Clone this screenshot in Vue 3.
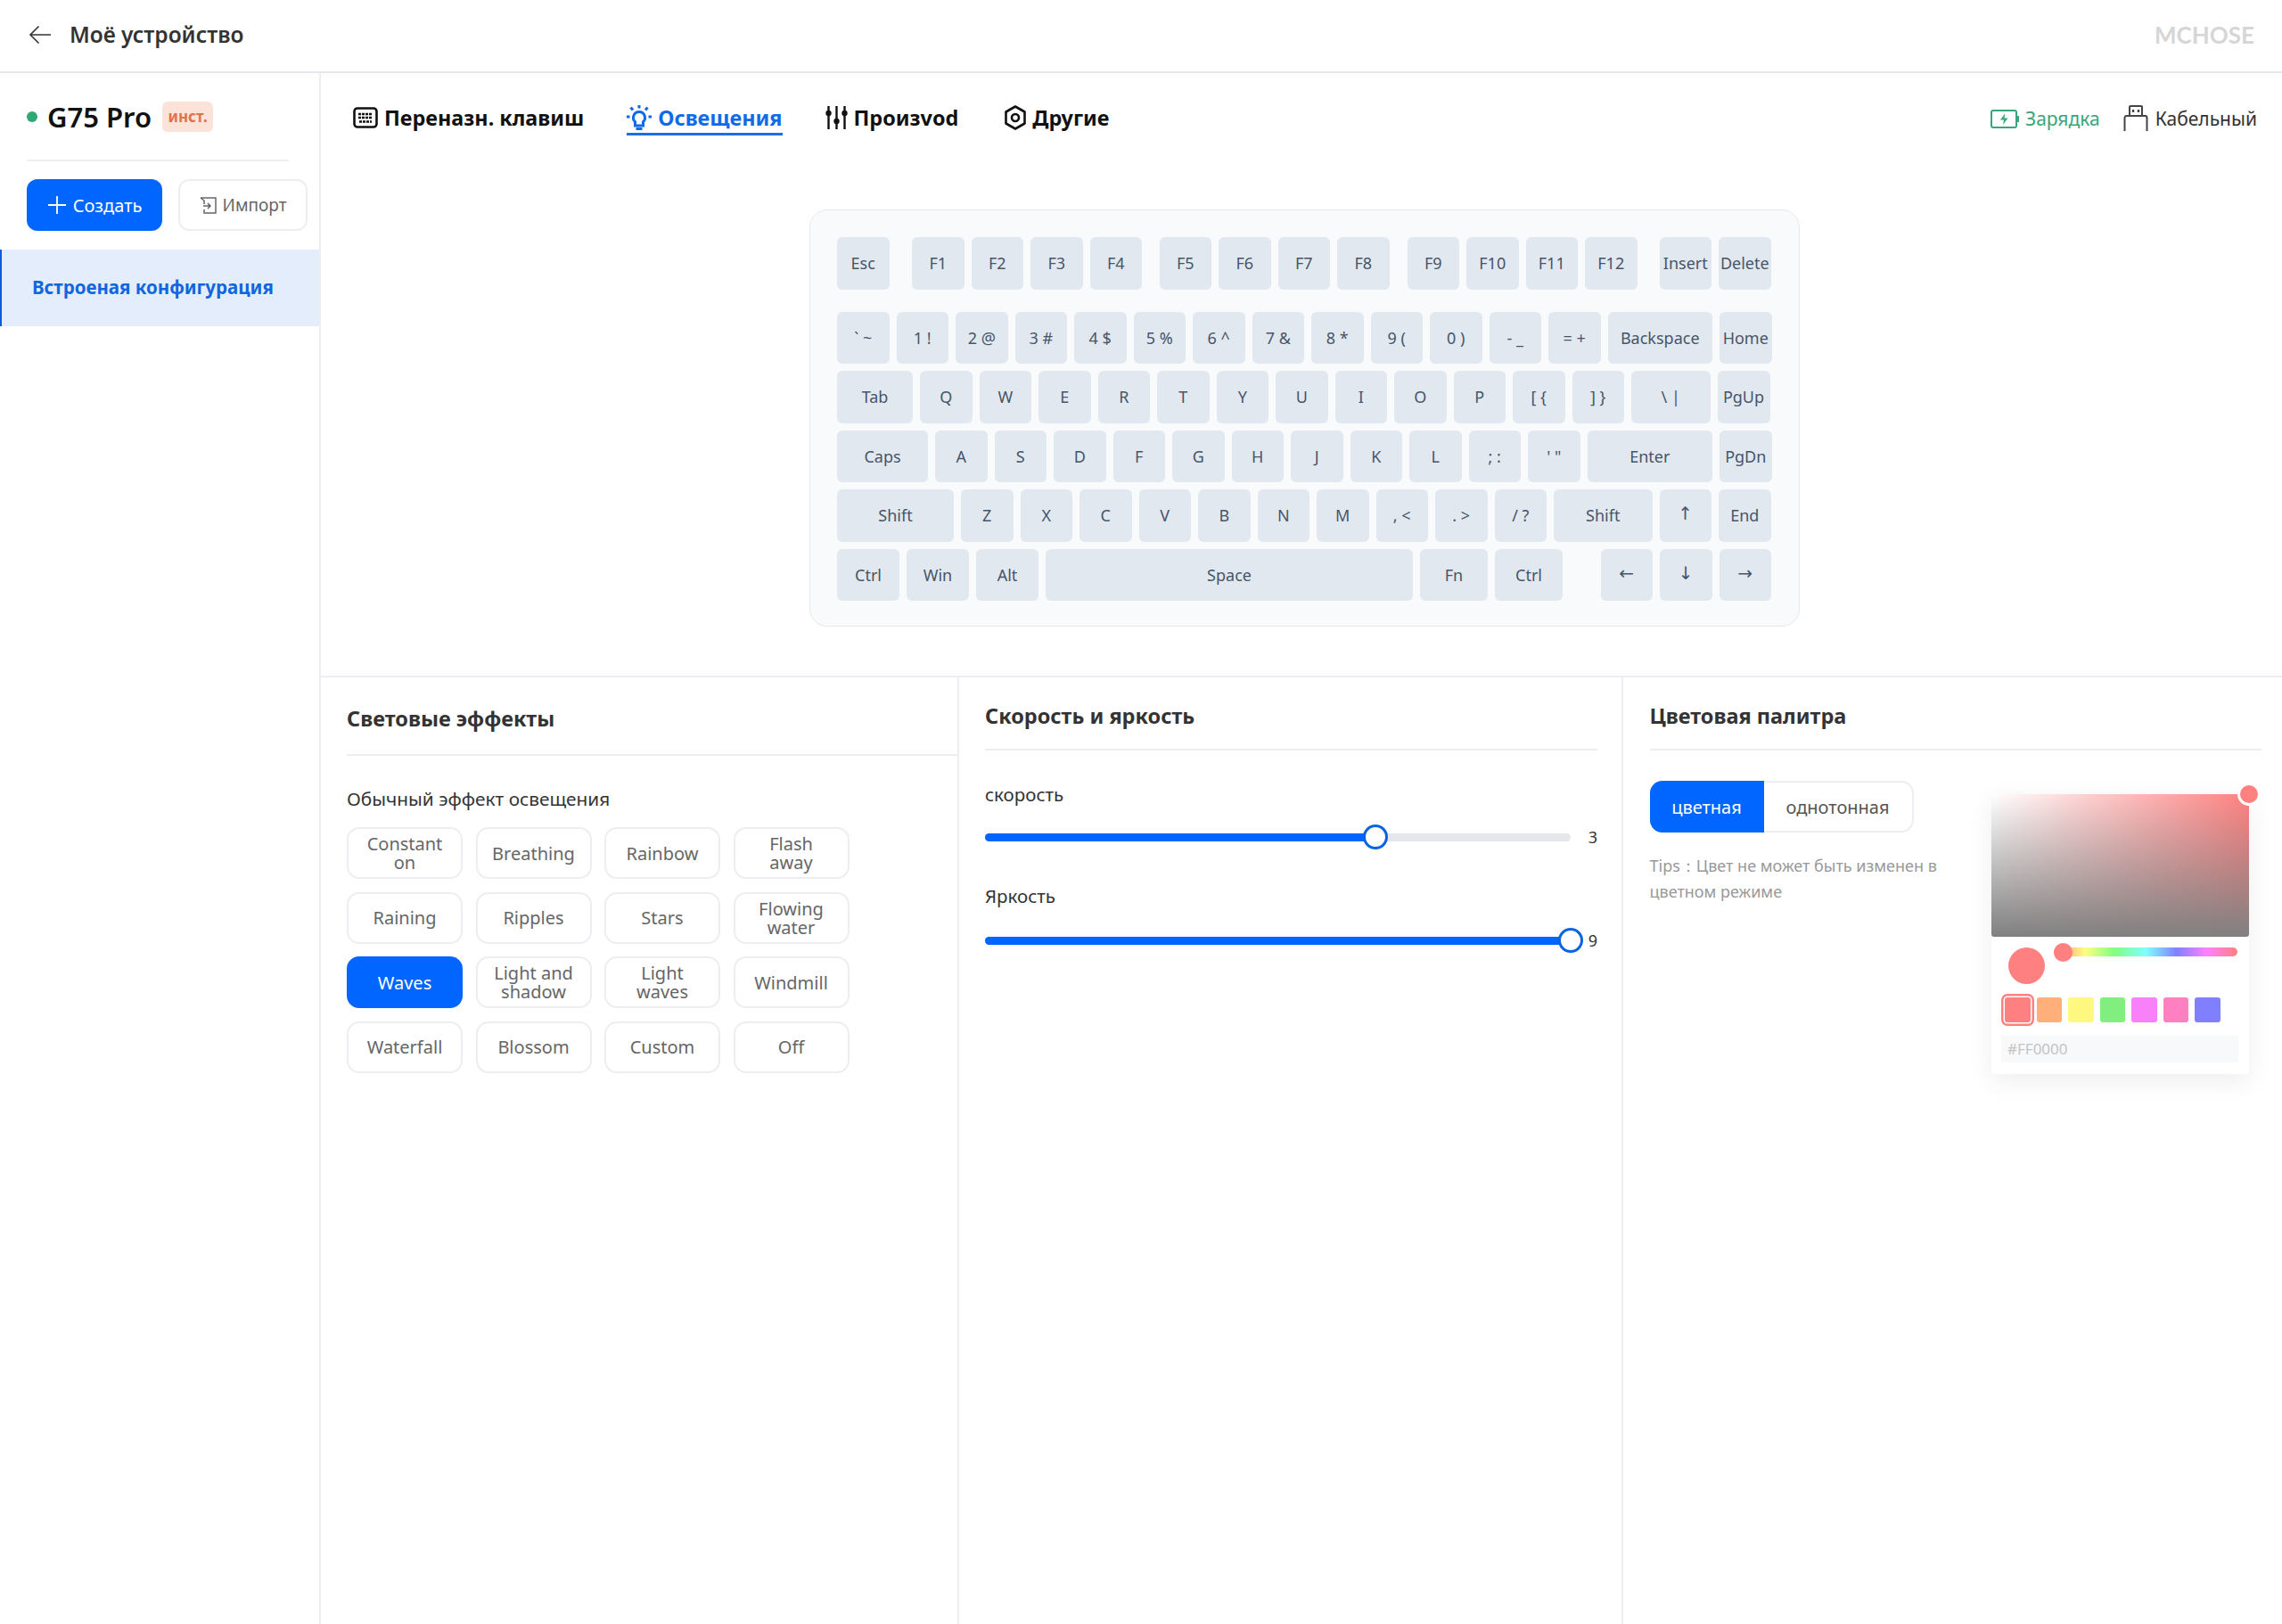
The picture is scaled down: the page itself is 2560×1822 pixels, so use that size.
<script setup>
import { ref } from 'vue'

const k = (t, w = 58.5, ml = 0) => ({ t, w, ml, arrow: '←↑↓→'.includes(t) })
const line = (s) => s.split('|').map((t) => k(t))

const keyRows = [
  [k('Esc'), k('F1', 58.5, 17.5), k('F2'), k('F3'), k('F4'), k('F5', 58.5, 11.5), k('F6'), k('F7'), k('F8'), k('F9', 58.5, 12), k('F10'), k('F11'), k('F12'), k('Insert', 58.5, 17), k('Delete')],
  [...line('` ~|1 !|2 @|3 #|4 $|5 %|6 ^|7 &|8 *|9 (|0 )|- _|= +'), k('Backspace', 117.5), k('Home')],
  [k('Tab', 85), ...line('Q|W|E|R|T|Y|U|I|O|P|[ {|] }'), k('\\ |', 88.5), k('PgUp', 59)],
  [k('Caps', 102), ...line('A|S|D|F|G|H|J|K|L|; :'), k("' \""), k('Enter', 140.5), k('PgDn')],
  [k('Shift', 131), ...line('Z|X|C|V|B|N|M|, <|. >|/ ?'), k('Shift', 110.5), k('↑'), k('End')],
  [k('Ctrl', 70), k('Win', 70), k('Alt', 70), k('Space', 412), k('Fn', 76), k('Ctrl', 76), k('←', 58.5, 34.5), k('↓'), k('→')],
]

const effects = [
  'Constant on', 'Breathing', 'Rainbow', 'Flash away',
  'Raining', 'Ripples', 'Stars', 'Flowing water',
  'Waves', 'Light and shadow', 'Light waves', 'Windmill',
  'Waterfall', 'Blossom', 'Custom', 'Off',
]
const current = ref('Waves')

const sliders = [
  { label: 'скорость', value: 3, pct: 66.6 },
  { label: 'Яркость', value: 9, pct: 100 },
]

const swatches = ['#ff8080', '#ffb07a', '#fff880', '#80ef80', '#f880f8', '#ff80c0', '#8080ff']
</script>

<template>
  <div class="page">
    <header class="topbar">
      <svg class="back" width="26" height="22" viewBox="0 0 26 22" fill="none" stroke="#333" stroke-width="1.6">
        <path d="M25 11H2M11.5 1.5 2 11l9.5 9.5" />
      </svg>
      <span class="top-title">Моё устройство</span>
      <span class="logo">MCHOSE</span>
    </header>

    <div class="body">
      <aside class="sidebar">
        <div class="device">
          <i class="dot"></i>
          <span class="device-name">G75 Pro</span>
          <span class="badge">инст.</span>
        </div>
        <div class="side-line"></div>
        <div class="side-btns">
          <button class="btn primary">
            <svg width="22" height="22" viewBox="0 0 22 22" stroke="#fff" stroke-width="1.8"><path d="M11 1v20M1 11h20" /></svg>
            Создать
          </button>
          <button class="btn ghost">
            <svg width="19" height="19" viewBox="0 0 19 19" fill="none" stroke="#666" stroke-width="1.5">
              <path d="M1 1h17v17H5v-4M1 1l4 3v4" /><path d="M4 10h8M9 7l3 3-3 3" />
            </svg>
            Импорт
          </button>
        </div>
        <div class="config">Встроеная конфигурация</div>
      </aside>

      <main class="main">
        <div class="tabs-row">
          <nav class="tabs">
            <a class="tab">
              <svg width="28" height="24" viewBox="0 0 28 24" fill="none" stroke="#111" stroke-width="2.6">
                <rect x="1.500" y="1.500" width="25" height="21" rx="3.500" />
                <path d="M6 8h16M6 12h16M7 16.500h14" stroke-width="2.400" stroke-dasharray="3 1" />
              </svg>
              Переназн. клавиш
            </a>
            <a class="tab active">
              <svg width="28" height="28" viewBox="0 0 28 28" fill="none" stroke="#0f6be8" stroke-width="3">
                <path d="M14 0v3.500M4.500 2.500l2.500 3M23.500 2.500 21 5.500M0 13h3.500M24.500 13H28" />
                <path d="M14 7.500a6.500 6.500 0 0 0-4.500 11.200V23h9v-4.300A6.500 6.500 0 0 0 14 7.500Z" />
                <path d="M10.500 26.500h7" />
              </svg>
              Освещения
            </a>
            <a class="tab">
              <svg width="25" height="26" viewBox="0 0 25 26" fill="#111" stroke="#111" stroke-width="2.4">
                <path d="M3.500 0v26M12.500 0v26M21.500 0v26" />
                <circle cx="3.500" cy="8" r="3.200" stroke="none" />
                <circle cx="12.500" cy="17" r="3.200" stroke="none" />
                <circle cx="21.500" cy="8" r="3.200" stroke="none" />
              </svg>
              Произvod
            </a>
            <a class="tab">
              <svg width="24" height="28" viewBox="0 0 24 28" fill="none" stroke="#111" stroke-width="2.600">
                <path d="M12 1.500 22.500 7.500v13L12 26.500 1.500 20.500v-13Z" stroke-linejoin="round" />
                <circle cx="12" cy="14" r="4" />
              </svg>
              Другие
            </a>
          </nav>
          <div class="status">
            <span class="stat green">
              <svg width="32" height="21" viewBox="0 0 32 21" fill="none" stroke="#3aa57a" stroke-width="2">
                <rect x="1" y="1" width="28" height="19" rx="2" />
                <path d="M31 7v7" />
                <path d="M16.500 4 11 11.500h4l-1 5.500 5.500-7.500h-4Z" fill="#3aa57a" stroke="none" />
              </svg>
              Зарядка
            </span>
            <span class="stat">
              <svg width="28" height="30" viewBox="0 0 28 30" fill="none" stroke="#444" stroke-width="2">
                <path d="M7 12V2a1 1 0 0 1 1-1h12a1 1 0 0 1 1 1v10" />
                <path d="M1.500 29V14a2 2 0 0 1 2-2h21a2 2 0 0 1 2 2v15" />
                <path d="M11 5v3M17 5v3" stroke-width="2.400" />
              </svg>
              Кабельный
            </span>
          </div>
        </div>

        <section class="kb-wrap">
          <div class="keyboard">
            <div v-for="(row, i) in keyRows" :key="i" class="kb-row">
              <div
                v-for="(key, j) in row"
                :key="j"
                class="key"
                :class="{ arrow: key.arrow }"
                :style="{ width: key.w + 'px', marginLeft: key.ml + 'px' }"
              >{{ key.t }}</div>
            </div>
          </div>
        </section>

        <section class="panels">
          <div class="panel p-effects">
            <h3 class="panel-title">Световые эффекты</h3>
            <div class="sub">Обычный эффект освещения</div>
            <div class="effects">
              <button
                v-for="e in effects"
                :key="e"
                class="effect"
                :class="{ on: e === current }"
              >{{ e }}</button>
            </div>
          </div>

          <div class="panel p-speed">
            <h3 class="panel-title">Скорость и яркость</h3>
            <div v-for="s in sliders" :key="s.label" class="slider">
              <div class="slider-label">{{ s.label }}</div>
              <div class="slider-row">
                <div class="track">
                  <div class="fill" :style="{ width: s.pct + '%' }"><i class="thumb"></i></div>
                </div>
                <span class="slider-val">{{ s.value }}</span>
              </div>
            </div>
          </div>

          <div class="panel p-color">
            <h3 class="panel-title">Цветовая палитра</h3>
            <div class="color-body">
              <div>
                <div class="seg">
                  <span class="seg-item on">цветная</span>
                  <span class="seg-item">однотонная</span>
                </div>
                <p class="tips">Tips：Цвет не может быть изменен в цветном режиме</p>
              </div>
              <div class="picker">
                <div class="sv"><i class="sv-handle"></i></div>
                <div class="pick-row">
                  <i class="preview"></i>
                  <div class="hue"><i class="hue-thumb"></i></div>
                </div>
                <div class="swatches">
                  <i
                    v-for="(c, i) in swatches"
                    :key="c"
                    class="swatch"
                    :class="{ picked: i === 0 }"
                    :style="{ background: c }"
                  ></i>
                </div>
                <div class="hex">#FF0000</div>
              </div>
            </div>
          </div>
        </section>
      </main>
    </div>
  </div>
</template>

<style>
html, body { margin: 0; background: #fff; }
</style>

<style scoped>
.page {
  height: 1822px;
  display: flex;
  flex-direction: column;
  overflow: hidden;
  font-family: "Noto Sans", "Liberation Sans", sans-serif;
  color: #333;
  background: #fff;
}

/* шапка */
.topbar {
  height: 77px;
  flex: none;
  display: flex;
  align-items: center;
  padding: 0 31px 3px 32px;
  border-bottom: 2px solid #e4e8ec;
}
.back { margin-right: 20px; }
.top-title { font-size: 24.500px; font-weight: 600; color: #333; }
.logo {
  margin-left: auto;
  font-family: Lato, "Noto Sans", sans-serif;
  font-size: 26px;
  font-weight: 700;
  color: #d6d6d6;
}

.body { flex: 1; display: flex; min-height: 0; }

/* боковая панель */
.sidebar {
  width: 358px;
  flex: none;
  border-right: 2px solid #eceef1;
}
.device {
  display: flex;
  align-items: center;
  height: 34px;
  margin: 32px 0 0 30px;
}
.dot { width: 12px; height: 12px; border-radius: 50%; background: #2fa873; margin-right: 11px; }
.device-name { font-size: 31px; font-weight: 600; color: #111; margin-right: 12px; }
.badge {
  width: 57px;
  height: 34px;
  line-height: 33px;
  text-align: center;
  border-radius: 6px;
  background: #fbe3da;
  color: #e0734a;
  font-size: 17px;
  font-weight: 700;
}
.side-line { width: 294px; height: 2px; margin: 31px 0 0 30px; background: #eceef1; }
.side-btns { display: flex; gap: 18px; margin: 20px 0 0 30px; }
.btn {
  height: 58px;
  display: flex;
  align-items: center;
  justify-content: center;
  gap: 7px;
  border-radius: 12px;
  font: inherit;
  font-size: 20px;
  padding: 0;
}
.btn.primary { width: 152px; border: 0; background: #0066ff; color: #fff; }
.btn.ghost { width: 145px; border: 2px solid #eceef1; background: #fff; color: #666; font-size: 19px; }
.config {
  height: 86px;
  line-height: 84px;
  margin-top: 21px;
  padding-left: 34px;
  background: #e4edfb;
  border-left: 2px solid #0b5ed7;
  box-sizing: border-box;
  font-size: 20.500px;
  font-weight: 700;
  color: #0f66e0;
  white-space: nowrap;
}

/* вкладки */
.main { flex: 1; min-width: 0; display: flex; flex-direction: column; }
.tabs-row {
  height: 153px;
  flex: none;
  display: flex;
  justify-content: space-between;
  align-items: flex-start;
  padding: 33px 28px 0 36px;
  box-sizing: border-box;
}
.tabs { display: flex; gap: 48px; }
.tab {
  height: 37px;
  display: flex;
  align-items: center;
  gap: 7px;
  box-sizing: border-box;
  border-bottom: 3px solid transparent;
  font-size: 23.400px;
  font-weight: 700;
  color: #111;
  white-space: nowrap;
}
.tab:last-child { margin-left: 4px; }
.tab.active { color: #0f6be8; border-bottom-color: #1a6fe8; }
.status { display: flex; gap: 26px; align-items: center; height: 34px; margin-top: 1px; }
.stat { display: flex; align-items: center; gap: 8px; font-size: 21px; color: #333; }
.stat.green { color: #3aa57a; gap: 7px; }

/* клавиатура */
.kb-wrap { height: 523px; flex: none; padding-left: 548px; }
.keyboard {
  width: 1111px;
  height: 468px;
  box-sizing: border-box;
  padding: 30px;
  border: 1px solid #e6e9ee;
  border-radius: 20px;
  background: #f8fafc;
}
.kb-row { display: flex; gap: 8px; margin-bottom: 8px; }
.kb-row:first-child { margin-bottom: 25px; }
.key {
  height: 58.500px;
  flex: none;
  display: flex;
  align-items: center;
  justify-content: center;
  border-radius: 6px;
  background: #e2e8f0;
  color: #475569;
  font-size: 18px;
  white-space: pre;
}
.key.arrow { font-family: "DejaVu Sans", sans-serif; font-size: 20px; padding-bottom: 4px; box-sizing: border-box; }

/* нижние панели */
.panels {
  flex: 1;
  display: flex;
  border-top: 2px solid #eceef1;
}
.panel { box-sizing: border-box; }
.panel-title {
  margin: 0;
  padding-bottom: 21px;
  border-bottom: 2px solid #eceef1;
  font-size: 23.500px;
  line-height: 32px;
  font-weight: 700;
  color: #333;
}
.p-effects { width: 716px; padding: 30px 0 0 29px; border-right: 2px solid #eceef1; }
.p-effects .panel-title { padding-bottom: 24px; }
.sub { margin-top: 34px; font-size: 20.800px; line-height: 28px; color: #333; }
.effects {
  display: grid;
  grid-template-columns: repeat(4, 130px);
  grid-auto-rows: 58px;
  gap: 14.500px;
  margin-top: 18px;
}
.effect {
  border: 2px solid #eceef1;
  border-radius: 14px;
  background: #fff;
  padding: 0 12px;
  font: inherit;
  font-size: 20px;
  line-height: 21px;
  color: #666;
}
.effect.on { background: #0066ff; border-color: #0066ff; color: #fff; }

.p-speed { width: 745px; padding: 27px 27px 0 29px; border-right: 2px solid #eceef1; }
.slider-label { margin-top: 35px; font-size: 20.500px; line-height: 28px; color: #333; }
.slider + .slider .slider-label { margin-top: 38px; }
.slider-row { display: flex; align-items: center; height: 28px; margin-top: 20px; }
.slider + .slider .slider-row { margin-top: 22px; }
.track { flex: 1; height: 9px; border-radius: 5px; background: #e5e7eb; }
.fill { position: relative; height: 100%; border-radius: 5px; background: #0066ff; }
.thumb {
  position: absolute;
  right: -14px;
  top: -10px;
  width: 28px;
  height: 28px;
  box-sizing: border-box;
  border: 3px solid #0a63e0;
  border-radius: 50%;
  background: #fff;
}
.slider-val { width: 30px; text-align: right; font-size: 18px; color: #333; }

.p-color { flex: 1; padding: 27px 23px 0 29.500px; }
.color-body {
  display: grid;
  grid-template-columns: 383.500px 289px;
  padding-top: 34px;
}
.seg {
  width: 296px;
  height: 58px;
  display: flex;
  box-sizing: border-box;
  border: 2px solid #eceef1;
  border-radius: 14px;
  font-size: 20px;
  color: #555;
}
.seg-item { flex: 1; display: flex; align-items: center; justify-content: center; white-space: nowrap; }
.seg-item.on {
  flex: 0 0 128px;
  margin: -2px 0 -2px -2px;
  border-radius: 14px 0 0 14px;
  background: #0066ff;
  color: #fff;
}
.tips { width: 340px; margin: 23px 0 0; font-size: 18px; line-height: 29px; color: #999; }
.picker {
  margin-top: 15px;
  height: 314px;
  box-shadow: 0 8px 28px rgba(0, 0, 0, 0.07);
  background: #fff;
}
.sv {
  position: relative;
  height: 160px;
  border-radius: 0 0 3px 3px;
  background:
    linear-gradient(to top, #808080, rgba(128, 128, 128, 0)),
    linear-gradient(to right, #fff, #ff8080);
}
.sv-handle {
  position: absolute;
  right: -13px;
  top: -13px;
  width: 26px;
  height: 26px;
  box-sizing: border-box;
  border: 3px solid #fff;
  border-radius: 50%;
  background: #ff8080;
}
.pick-row { display: flex; align-items: flex-start; margin: 12px 0 0 19px; }
.preview { width: 41px; height: 41px; border-radius: 50%; background: #ff8080; }
.hue {
  position: relative;
  width: 206px;
  height: 10px;
  margin-left: 10px;
  border-radius: 5px;
  background: linear-gradient(to right, #ff8080, #ffff80 17%, #80ff80 33%, #80ffff 50%, #8080ff 67%, #ff80ff 83%, #ff8080);
}
.hue-thumb {
  position: absolute;
  left: 0;
  top: -5px;
  width: 21px;
  height: 21px;
  border-radius: 50%;
  background: #ff8080;
}
.swatches { display: flex; gap: 7px; margin: 15px 0 0 15px; }
.swatch { width: 28.500px; height: 28px; border-radius: 3px; }
.swatch.picked { box-shadow: 0 0 0 1.500px #fff, 0 0 0 4px #ff8080; }
.hex {
  width: 266px;
  height: 30px;
  margin: 15px 0 0 11px;
  padding-left: 7px;
  box-sizing: border-box;
  line-height: 30px;
  background: #f8f9fb;
  font-size: 17px;
  color: #c4c4c4;
}
</style>
